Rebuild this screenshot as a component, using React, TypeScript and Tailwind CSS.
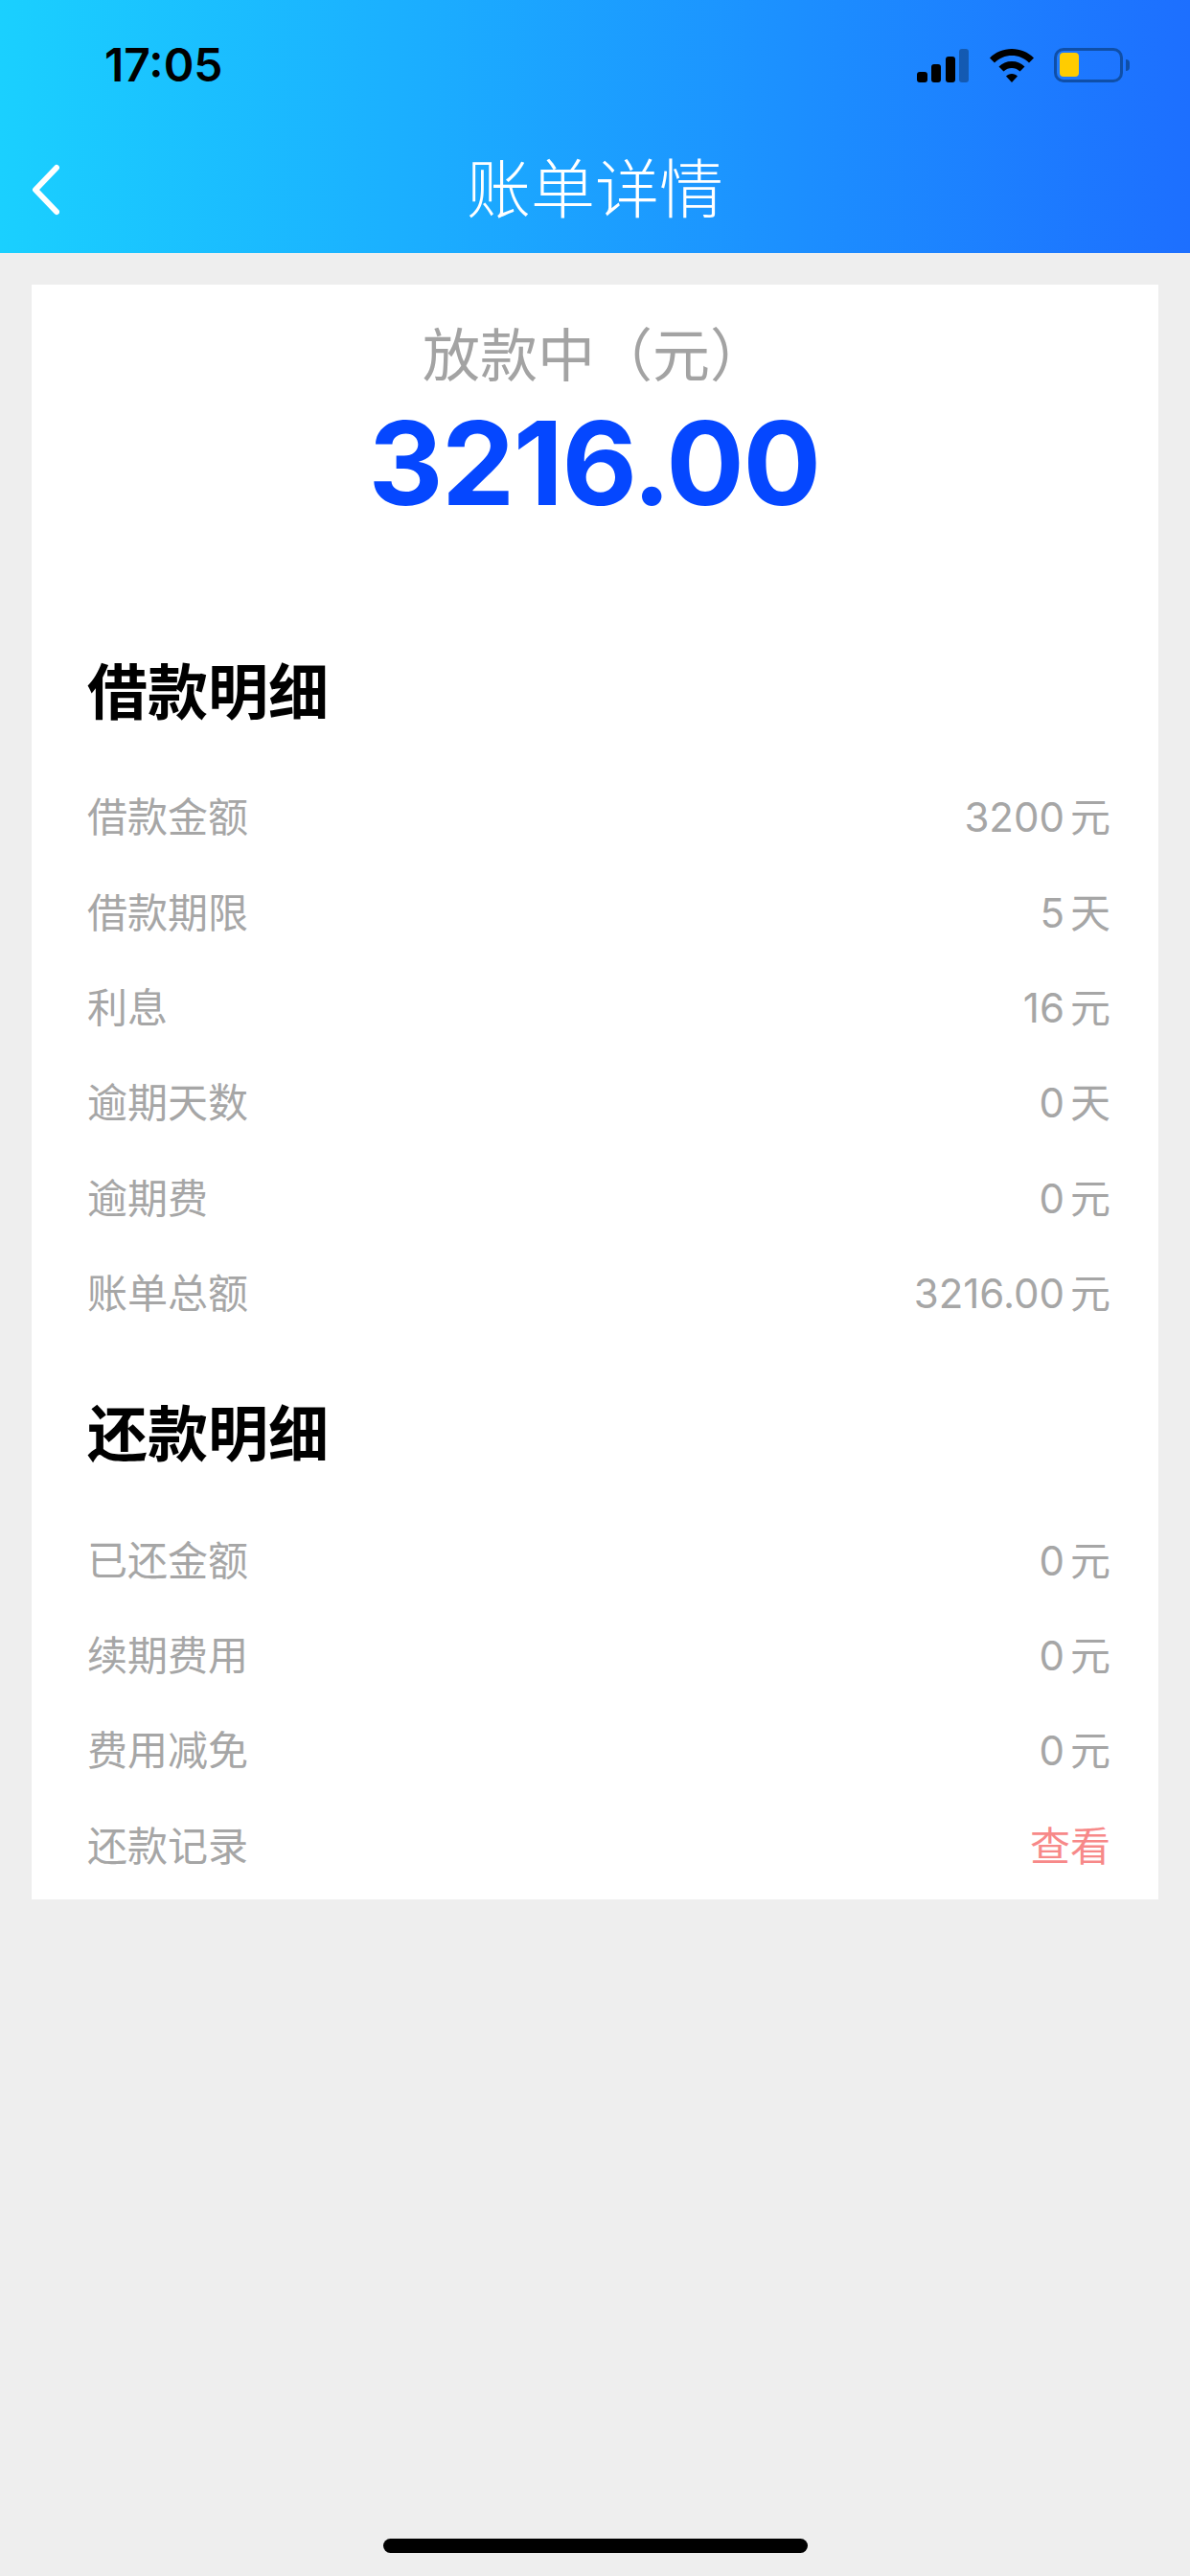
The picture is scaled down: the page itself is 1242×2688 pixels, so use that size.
const sans = 'font-["Inter","Noto_Sans_CJK_SC",sans-serif]';

const loanRows = [
  ['借款金额', '3200', '元'],
  ['借款期限', '5', '天'],
  ['利息', '16', '元'],
  ['逾期天数', '0', '天'],
  ['逾期费', '0', '元'],
  ['账单总额', '3216.00', '元'],
];

const repayRows = [
  ['已还金额', '0', '元'],
  ['续期费用', '0', '元'],
  ['费用减免', '0', '元'],
];

function Row({ label, children }: { label: string; children: React.ReactNode }) {
  return (
    <div className="flex h-[99.4px] items-center justify-between pl-[8px] text-[42px] font-normal text-[#a6a6a6]">
      <span>{label}</span>
      {children}
    </div>
  );
}

function Amount({ value, unit }: { value: string; unit: string }) {
  return (
    <span className="flex items-center gap-[6px]">
      <span>{value}</span>
      <span>{unit}</span>
    </span>
  );
}

function StatusBar() {
  return (
    <div className="flex h-[132px] items-center justify-between pl-[109px] pr-[63px] pt-[3px]">
      <span className="text-[48px] font-semibold leading-none text-black">17:05</span>
      <div className="flex items-center gap-[20px]">
        <svg width="56" height="36" viewBox="0 0 56 36">
          <rect x="1" y="25" width="11" height="11" rx="3" fill="#000" />
          <rect x="16" y="17" width="10" height="19" rx="3" fill="#000" />
          <rect x="31" y="9" width="10" height="27" rx="3" fill="#000" />
          <rect x="45" y="1" width="10" height="35" rx="3" fill="#000" fillOpacity="0.3" />
        </svg>
        <svg width="48" height="36" viewBox="0 0 48 36">
          <path d="M24 1C15 1 7 4.500 1 10.500l5 5C11 10.500 17 8 24 8s13 2.500 18 7.500l5-5C41 4.500 33 1 24 1z" fill="#000" />
          <path d="M24 14c-5.500 0-10 2-13.500 5.500l5 5C18 22 21 21 24 21s6 1 8.500 3.500l5-5C34 16 29.500 14 24 14z" fill="#000" />
          <path d="M24 27c-2.500 0-4.500 1-6 2.500L24 36l6-6.500C28.500 28 26.500 27 24 27z" fill="#000" />
        </svg>
        <div className="flex items-center gap-[3px]">
          <div className="flex h-[36px] w-[72px] items-center rounded-[10px] border-[3px] border-[#0f4fa8] px-[3px]">
            <div className="h-[25px] w-[20px] rounded-[4px] bg-[#ffcc00]" />
          </div>
          <div className="h-[12px] w-[4px] rounded-r-full bg-[#0f4fa8]" />
        </div>
      </div>
    </div>
  );
}

export default function App() {
  return (
    <div className={`flex min-h-[2688px] flex-col bg-[#eeeeee] ${sans}`}>
      <header className="h-[264px] bg-[linear-gradient(90deg,#1ad0ff,#1d6fff)]">
        <StatusBar />
        <div className="relative flex h-[132px] items-center justify-center">
          <svg className="absolute left-[30px] top-[38px]" width="32" height="56" viewBox="0 0 32 56" fill="none">
            <path d="M29 5L7 28l22 23" stroke="#fff" strokeWidth="6" strokeLinecap="round" strokeLinejoin="round" />
          </svg>
          <span className="text-[67px] font-light text-white">账单详情</span>
        </div>
      </header>

      <main className="mx-[33px] mt-[33px] flex h-[1685px] flex-col bg-white px-[50px]">
        <div className="flex flex-col items-center pt-[32px]">
          <span className="text-[60px] font-normal leading-[84px] text-[#a3a3a3]">放款中（元）</span>
          <span className="-ml-[2px] text-[121px] font-bold leading-[140px] tracking-[-1.500px] text-[#0547ff]">3216.00</span>
        </div>

        <h2 className="mt-[125px] pl-[8px] text-[63px] font-bold leading-[88px] text-black">借款明细</h2>
        <div className="mt-[37px]">
          {loanRows.map(([label, value, unit]) => (
            <Row key={label} label={label}>
              <Amount value={value} unit={unit} />
            </Row>
          ))}
        </div>

        <h2 className="mt-[53px] pl-[8px] text-[63px] font-bold leading-[88px] text-black">还款明细</h2>
        <div className="mt-[38px]">
          {repayRows.map(([label, value, unit]) => (
            <Row key={label} label={label}>
              <Amount value={value} unit={unit} />
            </Row>
          ))}
          <Row label="还款记录">
            <span className="text-[#f78989]">查看</span>
          </Row>
        </div>
      </main>

      <div className="mt-auto flex justify-center pb-[24px]">
        <div className="h-[15px] w-[443px] rounded-full bg-black" />
      </div>
    </div>
  );
}
